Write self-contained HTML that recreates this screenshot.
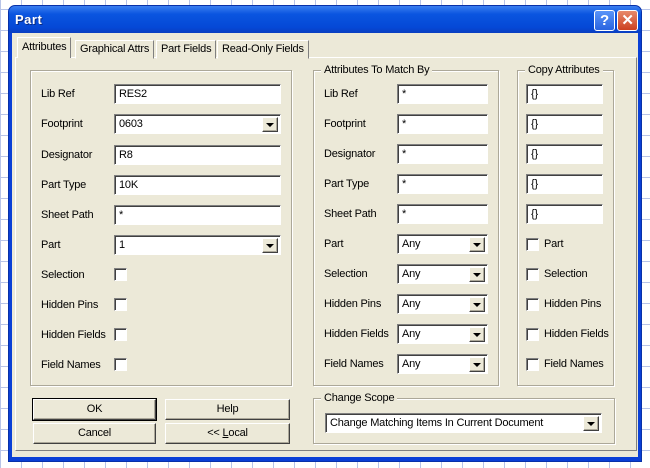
<!DOCTYPE html>
<html><head><meta charset="utf-8"><style>
*{box-sizing:border-box;margin:0;padding:0}
body{width:650px;height:468px;overflow:hidden;position:relative;font-family:"Liberation Sans",sans-serif;font-size:11px;color:#000;letter-spacing:-0.2px;
background-color:#fff;background-image:linear-gradient(#b8c4e8 1px,transparent 1px),linear-gradient(90deg,#b8c4e8 1px,transparent 1px);background-size:21px 21px;background-position:0 9px}
.a{position:absolute}
#dlg{left:8px;top:5px;width:634px;height:457px;background:#0a3fd6;border-radius:7px 7px 0 0;border:1px solid #0831a8}
#title{left:0;top:0;width:632px;height:27px;background:linear-gradient(#3b7ff0,#0a55e0 30%,#0548d6 80%,#0a3ec0);border-radius:6px 6px 0 0;color:#fff;font-weight:bold;font-size:13px;padding:6px 0 0 6px;text-shadow:1px 1px #0a2a80;letter-spacing:.5px}
#face{left:3px;top:27px;width:626px;height:424px;background:#ece9d8}
.tb{top:4px;width:21px;height:21px;border:1px solid #fff;border-radius:3px;color:#fff;font-weight:bold;font-size:15px;text-align:center;line-height:19px}
.lbl{position:absolute;font-size:11px}
.in{position:absolute;height:20px;background:#fff;border:1px solid;border-color:#808080 #fff #fff #808080;box-shadow:inset 1px 1px #404040;padding:3px 0 0 4px;font-size:11px}
.btn{position:absolute;right:2px;top:2px;width:16px;height:15px;background:#ece9d8;border:1px solid;border-color:#fff #404040 #404040 #fff;box-shadow:inset -1px -1px #aca899}
.btn:after{content:"";position:absolute;left:3px;top:5px;border-left:4px solid transparent;border-right:4px solid transparent;border-top:4px solid #000}
.cb{position:absolute;width:13px;height:13px;background:#fff;border:1px solid;border-color:#808080 #fff #fff #808080;box-shadow:inset 1px 1px #404040}
.grp{position:absolute;border:1px solid #aca899;box-shadow:1px 1px #fff, inset 1px 1px #fff}
.gt{position:absolute;top:-7px;left:7px;background:#ece9d8;padding:0 3px}
.pb{position:absolute;background:#ece9d8;border:1px solid;border-color:#fff #404040 #404040 #fff;box-shadow:inset -1px -1px #aca899;text-align:center;line-height:18px}
.tab{position:absolute;top:37px;height:19px;border:1px solid;border-color:#fff #808080 transparent #fff;padding:2px 4px 0;background:#ece9d8}
</style></head><body>
<div class="a" id="dlg">
<div class="a" id="title">Part</div>
<div class="a tb" style="left:585px;background:linear-gradient(#5a94f8,#2a64e0)">?</div>
<div class="a tb" style="left:608px;background:linear-gradient(#e88a6a,#cc4020)">✕</div>
<div class="a" id="face"></div>
</div>
<div class="a" style="left:15px;top:57px;width:622px;height:394px;border:1px solid;border-color:#fff #808080 #808080 #fff"></div>
<div class="tab" style="left:17px;top:37px;height:21px;padding-top:3px;border-bottom:none;z-index:2">Attributes</div>
<div class="tab" style="left:75px;top:40px">Graphical Attrs</div>
<div class="tab" style="left:156px;top:40px">Part Fields</div>
<div class="tab" style="left:217px;top:40px">Read-Only Fields</div>

<div class="grp" style="left:30px;top:70px;width:262px;height:316px"></div>
<div class="grp" style="left:313px;top:70px;width:186px;height:316px"><span class="gt">Attributes To Match By</span></div>
<div class="grp" style="left:517px;top:70px;width:97px;height:316px"><span class="gt">Copy Attributes</span></div>
<div class="grp" style="left:313px;top:398px;width:302px;height:46px"><span class="gt">Change Scope</span></div>

<span class="lbl" style="left:41px;top:88px">Lib Ref</span><div class="in" style="left:114px;top:84px;width:167px">RES2</div>
<span class="lbl" style="left:41px;top:118px">Footprint</span><div class="in" style="left:114px;top:114px;width:167px">0603<div class="btn"></div></div>
<span class="lbl" style="left:41px;top:149px">Designator</span><div class="in" style="left:114px;top:145px;width:167px">R8</div>
<span class="lbl" style="left:41px;top:179px">Part Type</span><div class="in" style="left:114px;top:175px;width:167px">10K</div>
<span class="lbl" style="left:41px;top:209px">Sheet Path</span><div class="in" style="left:114px;top:205px;width:167px">*</div>
<span class="lbl" style="left:41px;top:239px">Part</span><div class="in" style="left:114px;top:235px;width:167px">1<div class="btn"></div></div>
<span class="lbl" style="left:41px;top:269px">Selection</span><div class="cb" style="left:114px;top:268px"></div>
<span class="lbl" style="left:41px;top:299px">Hidden Pins</span><div class="cb" style="left:114px;top:298px"></div>
<span class="lbl" style="left:41px;top:329px">Hidden Fields</span><div class="cb" style="left:114px;top:328px"></div>
<span class="lbl" style="left:41px;top:359px">Field Names</span><div class="cb" style="left:114px;top:358px"></div>

<span class="lbl" style="left:324px;top:88px">Lib Ref</span><div class="in" style="left:397px;top:84px;width:91px">*</div>
<span class="lbl" style="left:324px;top:118px">Footprint</span><div class="in" style="left:397px;top:114px;width:91px">*</div>
<span class="lbl" style="left:324px;top:148px">Designator</span><div class="in" style="left:397px;top:144px;width:91px">*</div>
<span class="lbl" style="left:324px;top:178px">Part Type</span><div class="in" style="left:397px;top:174px;width:91px">*</div>
<span class="lbl" style="left:324px;top:208px">Sheet Path</span><div class="in" style="left:397px;top:204px;width:91px">*</div>
<span class="lbl" style="left:324px;top:238px">Part</span><div class="in" style="left:397px;top:234px;width:91px">Any<div class="btn"></div></div>
<span class="lbl" style="left:324px;top:268px">Selection</span><div class="in" style="left:397px;top:264px;width:91px">Any<div class="btn"></div></div>
<span class="lbl" style="left:324px;top:298px">Hidden Pins</span><div class="in" style="left:397px;top:294px;width:91px">Any<div class="btn"></div></div>
<span class="lbl" style="left:324px;top:328px">Hidden Fields</span><div class="in" style="left:397px;top:324px;width:91px">Any<div class="btn"></div></div>
<span class="lbl" style="left:324px;top:358px">Field Names</span><div class="in" style="left:397px;top:354px;width:91px">Any<div class="btn"></div></div>

<div class="in" style="left:526px;top:84px;width:77px">{}</div>
<div class="in" style="left:526px;top:114px;width:77px">{}</div>
<div class="in" style="left:526px;top:144px;width:77px">{}</div>
<div class="in" style="left:526px;top:174px;width:77px">{}</div>
<div class="in" style="left:526px;top:204px;width:77px">{}</div>
<div class="cb" style="left:526px;top:238px"></div><span class="lbl" style="left:544px;top:238px">Part</span>
<div class="cb" style="left:526px;top:268px"></div><span class="lbl" style="left:544px;top:268px">Selection</span>
<div class="cb" style="left:526px;top:298px"></div><span class="lbl" style="left:544px;top:298px">Hidden Pins</span>
<div class="cb" style="left:526px;top:328px"></div><span class="lbl" style="left:544px;top:328px">Hidden Fields</span>
<div class="cb" style="left:526px;top:358px"></div><span class="lbl" style="left:544px;top:358px">Field Names</span>

<div class="in" style="left:325px;top:413px;width:277px">Change Matching Items In Current Document<div class="btn"></div></div>

<div class="pb" style="left:33px;top:399px;width:123px;height:21px;outline:1px solid #000">OK</div>
<div class="pb" style="left:165px;top:399px;width:125px;height:21px">Help</div>
<div class="pb" style="left:33px;top:423px;width:123px;height:21px">Cancel</div>
<div class="pb" style="left:165px;top:423px;width:125px;height:21px">&lt;&lt; <u>L</u>ocal</div>
</body></html>
